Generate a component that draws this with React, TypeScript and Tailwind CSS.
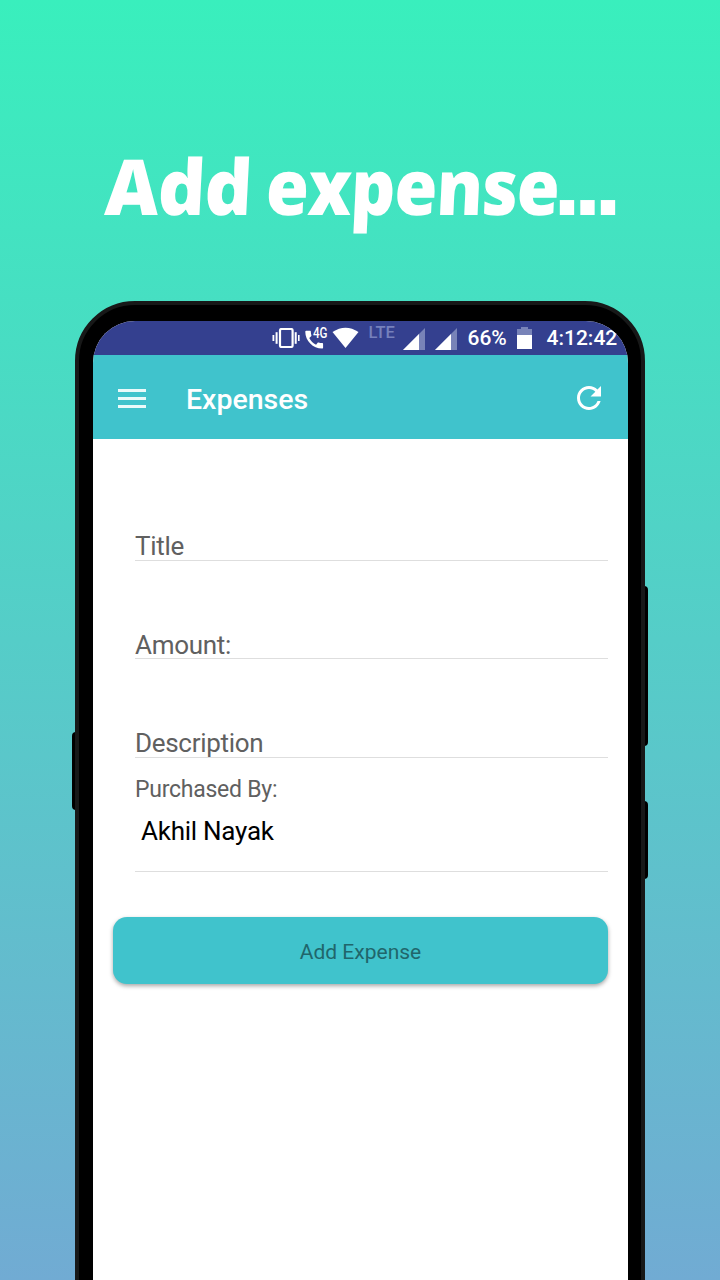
import React from "react";

function VibrateIcon() {
  return (
    <svg className="ml-[179px] h-5 w-[28px] shrink-0" viewBox="0 0 28 20" fill="#fff">
      <rect x="8" y="1" width="12.6" height="18" rx="1.5" fill="none" stroke="#fff" strokeWidth="2.2" />
      <rect x="0.5" y="7" width="1.8" height="6" />
      <rect x="3.6" y="4.2" width="2" height="11.6" />
      <rect x="22.7" y="4.2" width="2" height="11.6" />
      <rect x="26" y="7" width="1.6" height="6" />
    </svg>
  );
}

function CallIcon() {
  return (
    <svg className="ml-[4px] h-[24px] w-[24px] shrink-0 overflow-visible" viewBox="0 0 24 24" fill="#fff">
      <g transform="translate(-1.7 1.8) scale(.99)">
        <path d="M20.01 15.38c-1.23 0-2.42-.2-3.53-.56-.35-.12-.74-.03-1.01.24l-1.57 1.97c-2.83-1.35-5.48-3.9-6.89-6.83l1.95-1.66c.27-.28.35-.67.24-1.02-.37-1.11-.56-2.3-.56-3.53 0-.54-.45-.99-.99-.99H4.19C3.65 3 3 3.24 3 3.99 3 13.28 10.73 21 20.01 21c.71 0 .99-.63.99-1.18v-3.45c0-.54-.45-.99-.99-.99z" />
      </g>
      <text x="9" y="12" fontFamily="Roboto, sans-serif" fontWeight="500" fontSize="14" textLength="14.5" lengthAdjust="spacingAndGlyphs">4G</text>
    </svg>
  );
}

function SignalIcon({ className }: { className: string }) {
  return (
    <svg className={className} viewBox="0 0 22 22">
      <path d="M22 0V22H0Z" fill="#7883b8" />
      <path d="M16 6V22H0Z" fill="#fff" />
    </svg>
  );
}

function StatusBar() {
  return (
    <div className="flex h-[34px] items-center overflow-hidden whitespace-nowrap bg-[#34408f]">
      <VibrateIcon />
      <CallIcon />
      <svg className="ml-[4px] h-[22px] w-[27px] shrink-0" viewBox="0 0 27 22" fill="#fff">
        <path d="M0.5 5Q13.5-3.6 26.5 5L13.5 21Z" />
      </svg>
      <span className="relative -top-[5px] ml-[10px] w-[28px] text-[16.5px] font-medium leading-none text-[#7681bc]">LTE</span>
      <SignalIcon className="ml-[6px] mt-0.5 h-[22px] w-[22px] shrink-0" />
      <SignalIcon className="ml-[10px] mt-0.5 h-[22px] w-[22px] shrink-0" />
      <span className="ml-[11px] mt-px w-[40px] text-[21px] font-medium leading-none text-white">66%</span>
      <svg className="ml-[9px] h-[22px] w-[15px] shrink-0" viewBox="0 0 15 22">
        <path d="M4 0h7v2h4v6H0V2h4z" fill="#7883b8" />
        <path d="M0 8h15v14H0z" fill="#fff" />
      </svg>
      <span className="ml-[15px] mt-px text-[21px] font-medium leading-none text-white">4:12:42</span>
    </div>
  );
}

function AppBar() {
  return (
    <header className="flex h-[84px] items-center bg-[#40c3cc] pl-[25.5px] pr-[27px] text-white">
      <div className="mt-[3px] flex w-7 flex-col gap-[5px]">
        <span className="h-[3px] bg-[#eafafa]" />
        <span className="h-[3px] bg-[#eafafa]" />
        <span className="h-[3px] bg-[#eafafa]" />
      </div>
      <h2 className="ml-[40px] mt-[7px] flex-1 text-[28.5px] font-medium leading-none">Expenses</h2>
      <svg className="mt-px h-6 w-6" viewBox="4 4 16 16" fill="#fff">
        <path d="M17.65 6.35C16.2 4.9 14.21 4 12 4c-4.42 0-7.99 3.58-7.99 8s3.57 8 7.99 8c3.73 0 6.84-2.55 7.73-6h-2.08c-.82 2.33-3.04 4-5.65 4-3.31 0-6-2.69-6-6s2.69-6 6-6c1.66 0 3.14.69 4.22 1.78L13 11h7V4l-2.35 2.35z" />
      </svg>
    </header>
  );
}

function Field({ label }: { label: string }) {
  return (
    <div className="flex h-[98.6px] items-end border-b-[1.5px] border-[#dedede]">
      <span className="text-[26px] leading-[26.6px] tracking-[-0.3px] text-[#606060]">{label}</span>
    </div>
  );
}

export default function App() {
  return (
    <main className="flex h-[1280px] w-[720px] flex-col items-center overflow-hidden bg-linear-to-b/srgb from-[#39efbd] to-[#71abd3] font-[Roboto,sans-serif]">
      <h1 className="flex h-[301px] w-full shrink-0 whitespace-pre pl-[104px] pt-[133px] font-['Open_Sans',sans-serif] text-[77px] font-extrabold leading-[105px] tracking-[-1px] text-white">
        <span className="w-[161px] origin-left -skew-x-3 scale-x-[0.96]">Add </span>
        <span className="w-[292px] origin-left -skew-x-3 scale-x-[0.9]">expense</span>
        <span className="relative -top-[5px] -ml-[4px] font-['Liberation_Sans',sans-serif] text-[101px] font-bold tracking-[-7.5px]">...</span>
      </h1>

      <div className="relative h-[1100px] w-[570px] shrink-0">
        <span className="absolute -left-[3px] top-[431px] h-[78px] w-2 rounded-sm bg-black" />
        <span className="absolute -right-[3px] top-[285px] h-[160px] w-2 rounded-sm bg-black" />
        <span className="absolute -right-[3px] top-[500px] h-[78px] w-2 rounded-sm bg-black" />
        <div className="relative h-full rounded-t-[60px] border-[4px] border-[#171818] bg-black pl-[13.5px] pr-[12.5px] pt-4">
          <div className="mr-[0.5px] h-full overflow-hidden rounded-t-[42px] bg-white">
            <StatusBar />
            <AppBar />
            <section className="flex flex-col pl-[20px] pr-[20.5px] pt-[23px]">
              <div className="ml-[22.5px]">
                <Field label="Title" />
                <Field label="Amount:" />
                <Field label="Description" />
                <div className="flex h-[114px] flex-col border-b-[1.5px] border-[#dedede] pt-[18px]">
                  <span className="text-[23px] leading-7 tracking-[-0.25px] text-[#606060]">Purchased By:</span>
                  <span className="ml-[6px] mt-[13px] text-[26px] leading-7 tracking-[-0.25px] text-black">Akhil Nayak</span>
                </div>
              </div>
              <button className="mt-[45px] h-[67px] rounded-[14px] bg-[#40c3cc] pl-px pt-1 text-[21px] text-[#20666b] shadow-[0_2px_4px_rgba(0,0,0,0.35)]">
                Add Expense
              </button>
            </section>
          </div>
        </div>
      </div>
    </main>
  );
}
